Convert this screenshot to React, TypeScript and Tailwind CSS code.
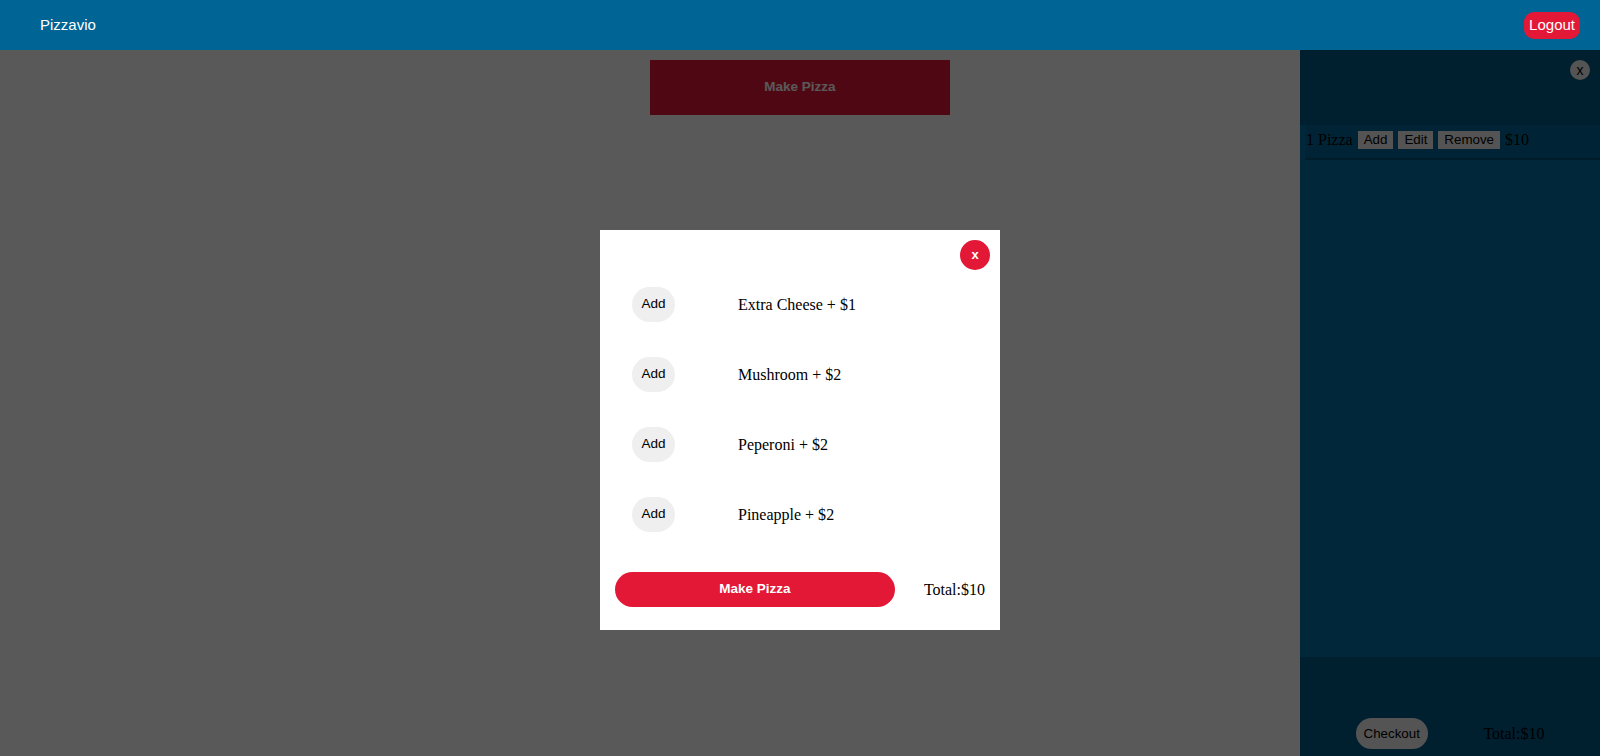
import React from 'react';

const toppings = [
  { name: 'Extra Cheese', price: 1 },
  { name: 'Mushroom', price: 2 },
  { name: 'Peperoni', price: 2 },
  { name: 'Pineapple', price: 2 },
];

const sans = "font-['Liberation_Sans',Arial,sans-serif]";
const serif = "font-['Liberation_Serif','Times_New_Roman',serif]";

const App = () => {
  return (
    <div className={`relative min-h-screen bg-white ${serif}`}>
      {/* Navbar */}
      <nav className={`relative z-20 flex h-[50px] items-center justify-between bg-[#006494] pl-10 pr-5 ${sans}`}>
        <span className="text-[15px] text-white">Pizzavio</span>
        <button className="h-[27px] rounded-[10px] bg-[#e31837] px-[5px] text-[15px] text-white">Logout</button>
      </nav>

      {/* Main */}
      <main className="flex justify-center pt-[10px]">
        <button className={`h-[55px] w-[300px] bg-[#e31837] text-[13.5px] font-semibold text-white ${sans}`}>Make Pizza</button>
      </main>

      {/* Cart drawer */}
      <aside className="fixed bottom-0 right-0 top-[50px] flex w-[300px] flex-col bg-[#0070a6]">
        <div className="relative h-[75px] bg-[#005a87]">
          <button className={`absolute right-[10px] top-[10px] flex h-5 w-5 items-center justify-center rounded-full bg-[#efefef] text-[14px] leading-none text-black ${sans}`}>x</button>
        </div>
        <div className="ml-[5px] flex h-[35px] items-start gap-[5px] border-b-2 border-[#005078] bg-[#006897] pt-[6px] text-[16px] leading-[18px] text-black">
          <span className="pl-px">1 Pizza</span>
          <button className={`h-[18px] bg-[#efefef] px-[6px] text-[13.33px] leading-none ${sans}`}>Add</button>
          <button className={`h-[18px] bg-[#efefef] px-[6px] text-[13.33px] leading-none ${sans}`}>Edit</button>
          <button className={`h-[18px] bg-[#efefef] px-[6px] text-[13.33px] leading-none ${sans}`}>Remove</button>
          <span>$10</span>
        </div>
        <div className="flex-1" />
        <div className="flex h-[99px] items-start justify-evenly bg-[#005a87] pt-[61px]">
          <button className={`h-[31px] rounded-full bg-[#efefef] px-2 text-[13.33px] text-black ${sans}`}>Checkout</button>
          <span className="mt-[4px] text-[16px] text-black">Total:$10</span>
        </div>
      </aside>

      {/* Overlay */}
      <div className="fixed inset-x-0 bottom-0 top-[50px] z-10 bg-[rgba(0,0,0,0.65)]" />

      {/* Modal */}
      <div className="fixed left-1/2 top-[230px] z-30 flex h-[400px] w-[400px] -translate-x-1/2 flex-col bg-white">
        <button className={`mr-[10px] mt-[10px] flex h-[30px] w-[30px] items-center justify-center self-end rounded-full bg-[#e31837] text-[13px] font-bold text-white ${sans}`}>x</button>
        <div className="mt-[17px] flex flex-col gap-[35px]">
          {toppings.map((t) => (
            <div key={t.name} className="flex items-center pl-[32px]">
              <button className={`h-[35px] w-[43px] rounded-full bg-[#efefef] text-[13.5px] text-black ${sans}`}>Add</button>
              <span className="ml-[63px] text-[16px] text-black">
                {t.name} + ${t.price}
              </span>
            </div>
          ))}
        </div>
        <div className="mt-[40px] flex items-center justify-between px-[15px]">
          <button className={`h-[35px] w-[280px] rounded-full bg-[#e31837] text-[13.5px] font-semibold text-white ${sans}`}>Make Pizza</button>
          <span className="text-[16px] text-black">Total:$10</span>
        </div>
      </div>
    </div>
  );
};

export default App;
